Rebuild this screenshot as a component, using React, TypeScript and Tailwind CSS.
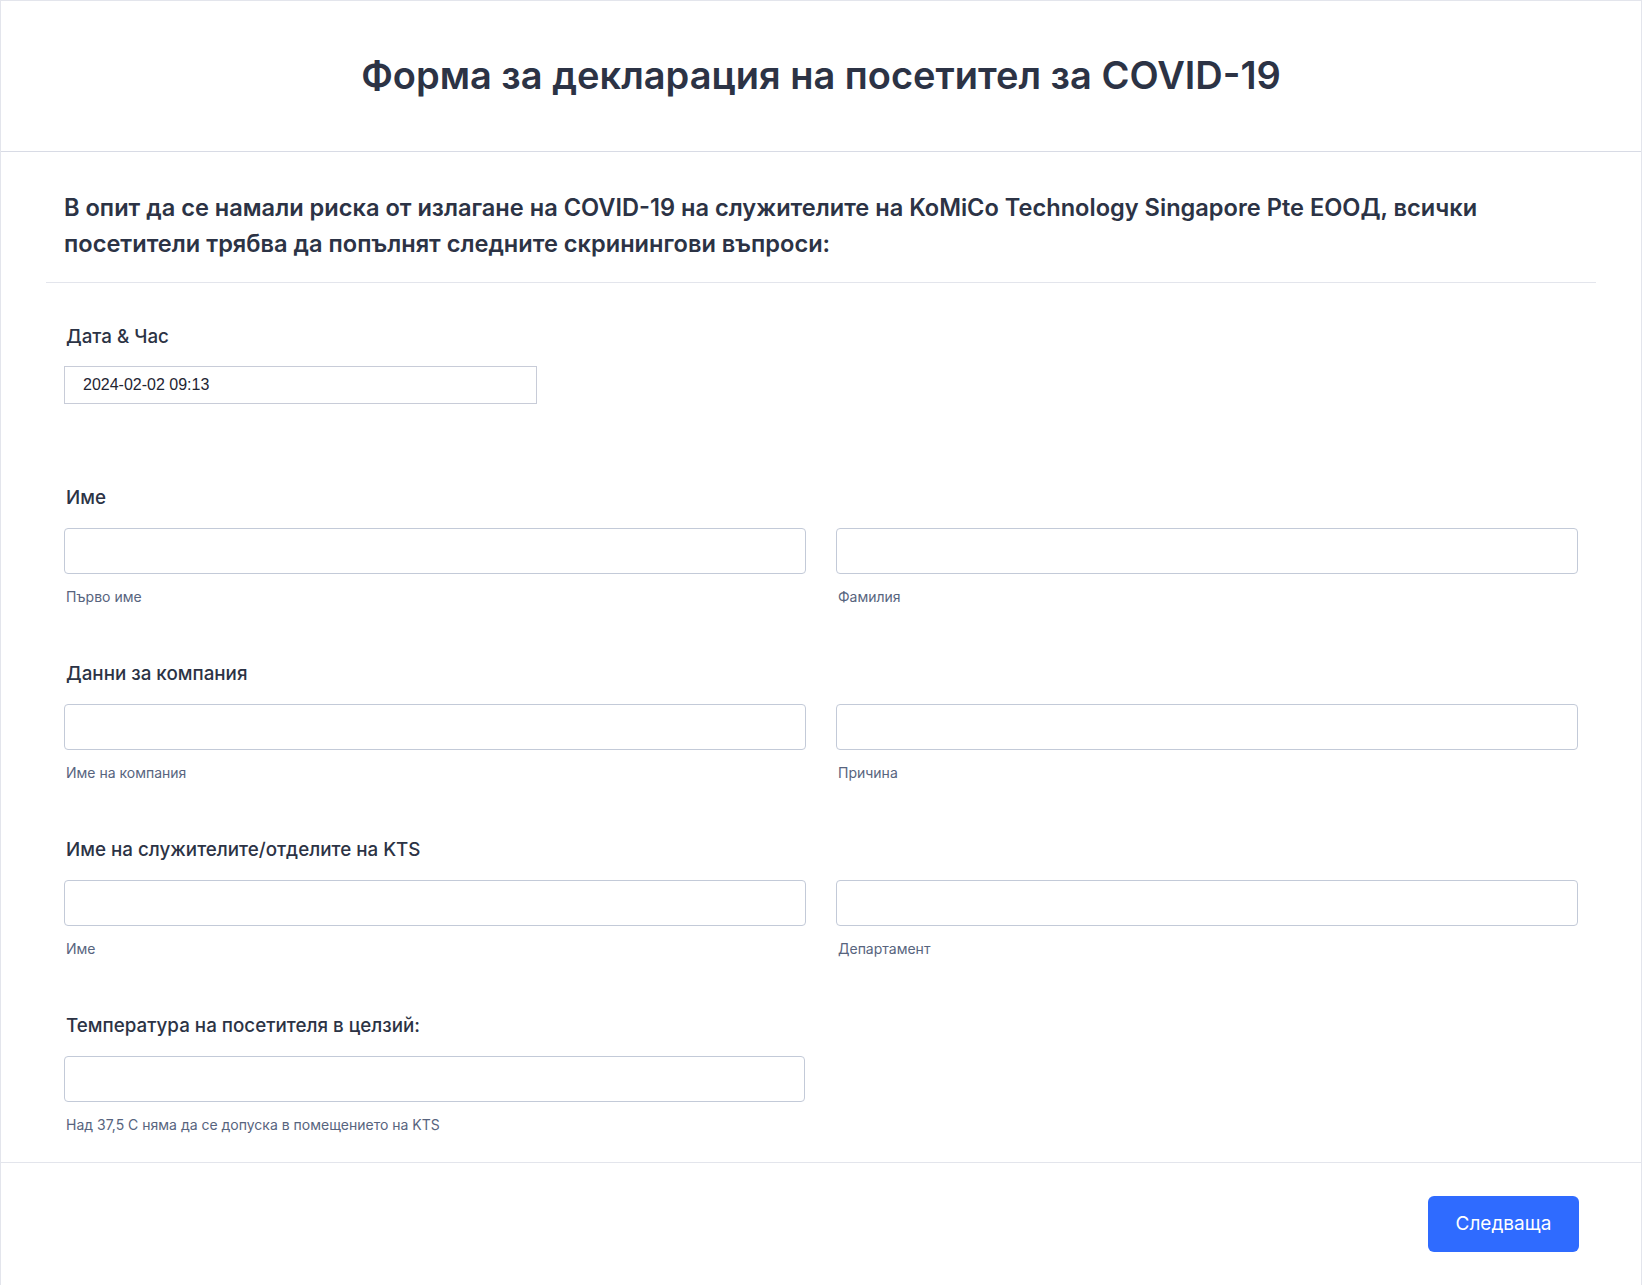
import React from "react";

const inter = { fontFamily: "Inter, 'Noto Sans', sans-serif" };

function Field({ label, subs, half }: { label: string; subs: string[]; half?: boolean }) {
  return (
    <div className="pb-[55px]">
      <div className="text-[18.8px] leading-[24px] font-medium text-[#2c3345] pl-[2px] mb-[18px]">{label}</div>
      <div className={half ? "w-[741px]" : "grid grid-cols-2 gap-x-[30px]"}>
        {subs.map((s) => (
          <div key={s}>
            <input
              type="text"
              className="block w-full h-[46px] rounded-[4px] border border-[#c3cad8] bg-white px-3 outline-none"
            />
            <div className="mt-[13px] text-[14px] leading-[20px] text-[#57647e] pl-[2px]">{s}</div>
          </div>
        ))}
      </div>
    </div>
  );
}

export default function App() {
  return (
    <div style={inter} className="w-[1642px] min-h-[1285px] bg-white border-l border-t border-r border-[#e3e5ec]">
      {/* header */}
      <div className="h-[151px] border-b border-[#d8dbe5] flex items-center justify-center">
        <h1 className="text-[38px] font-semibold text-[#2c3345] leading-none -mt-[2px]">
          Форма за декларация на посетител за COVID-19
        </h1>
      </div>

      <div className="px-[45px]">
        <div className="pt-[38px] pb-[20px] px-[18px] border-b border-[#e3e5ec]">
          <p className="text-[23.6px] leading-[36px] font-semibold text-[#2c3345]">
            В опит да се намали риска от излагане на COVID-19 на служителите на KoMiCo Technology Singapore Pte ЕООД, всички
            посетители трябва да попълнят следните скринингови въпроси:
          </p>
        </div>

        <div className="px-[18px] pt-[42px]">
          <div className="pb-[82px]">
            <div className="text-[18.8px] leading-[24px] font-medium text-[#2c3345] pl-[2px] mb-[17px]">Дата &amp; Час</div>
            <div
              className="w-[473px] h-[38px] border border-[#c8ccd8] flex items-center pl-[18px] text-[16px] text-[#1f2533]"
              style={{ fontFamily: "'Liberation Sans', Arial, sans-serif" }}
            >
              2024-02-02 09:13
            </div>
          </div>

          <Field label="Име" subs={["Първо име", "Фамилия"]} />
          <Field label="Данни за компания" subs={["Име на компания", "Причина"]} />
          <Field label="Име на служителите/отделите на KTS" subs={["Име", "Департамент"]} />
          <div className="-mb-[28px]">
            <Field label="Температура на посетителя в целзий:" subs={["Над 37,5 С няма да се допуска в помещението на KTS"]} half />
          </div>
        </div>
      </div>

      {/* footer */}
      <div className="border-t border-[#e3e5ec] pt-[33px] pr-[62px] pb-[40px] flex justify-end">
        <button className="w-[151px] h-[56px] rounded-[6px] bg-[#2f6bff] text-white text-[19px] font-normal">
          Следваща
        </button>
      </div>
    </div>
  );
}
